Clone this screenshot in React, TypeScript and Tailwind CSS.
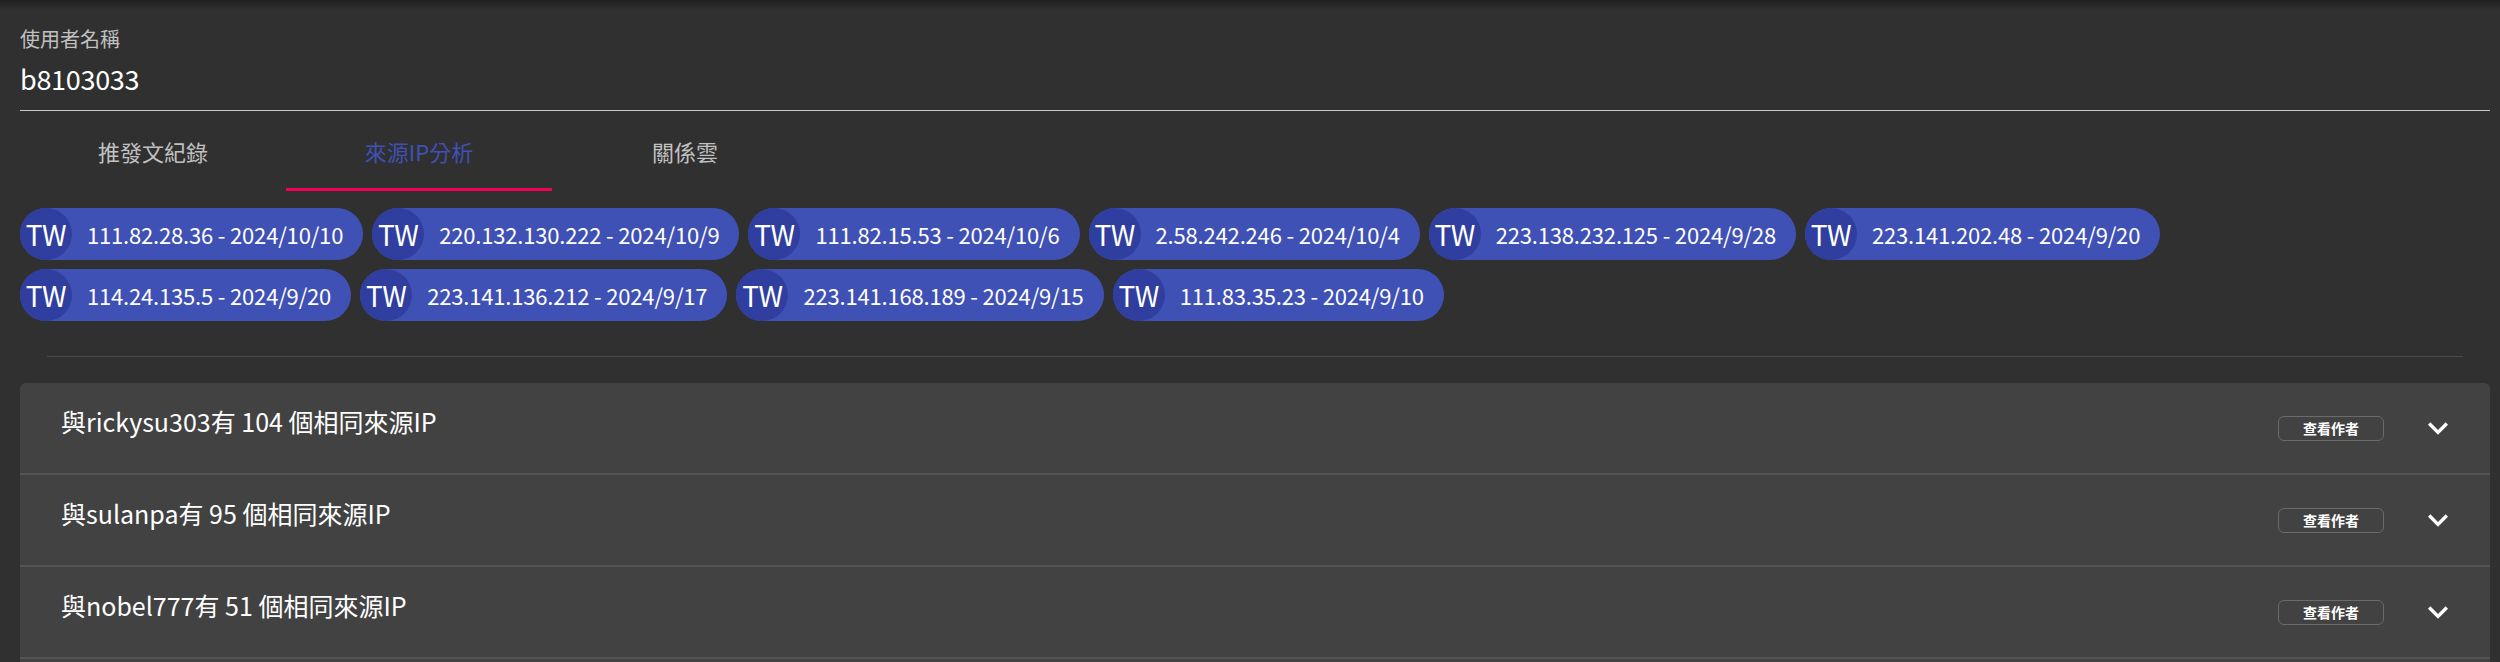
const ips = [
  { ip: '111.82.28.36', date: '2024/10/10' },
  { ip: '220.132.130.222', date: '2024/10/9' },
  { ip: '111.82.15.53', date: '2024/10/6' },
  { ip: '2.58.242.246', date: '2024/10/4' },
  { ip: '223.138.232.125', date: '2024/9/28' },
  { ip: '223.141.202.48', date: '2024/9/20' },
  { ip: '114.24.135.5', date: '2024/9/20' },
  { ip: '223.141.136.212', date: '2024/9/17' },
  { ip: '223.141.168.189', date: '2024/9/15' },
  { ip: '111.83.35.23', date: '2024/9/10' },
];

const related = [
  { name: 'rickysu303', count: 104 },
  { name: 'sulanpa', count: 95 },
  { name: 'nobel777', count: 51 },
];

const tabs = ['推發文紀錄', '來源IP分析', '關係雲'];

const ExpandMore = () => (
  <svg viewBox="0 0 24 24" className="w-[40px] h-[40px] fill-white">
    <path d="M16.59 8.59L12 13.17 7.41 8.59 6 10l6 6 6-6z" />
  </svg>
);

const App = () => {
  return (
    <div className="relative min-h-screen bg-[#303030] text-white font-['Noto_Sans_CJK_TC',sans-serif]">
      {/* app bar shadow */}
      <div className="absolute inset-x-0 top-0 h-[10px] bg-gradient-to-b from-[#1f1f1f] to-transparent" />

      <div className="pl-[20px] pr-[10px]">
        {/* username field */}
        <div className="pt-[24px] border-b border-[#c8c8c8]">
          <div className="text-[20px] leading-[30px] text-[#c1c1c1]">使用者名稱</div>
          <div className="mt-[5px] pb-[11px] text-[27px] leading-[40px] tracking-[-0.3px] text-white">b8103033</div>
        </div>

        {/* tabs */}
        <div className="flex h-[80px]">
          {tabs.map((t, i) => (
            <div
              key={t}
              className={
                i === 1
                  ? 'relative w-[266px] flex items-center justify-center text-[22px] text-[#3f51b5]'
                  : 'relative w-[266px] flex items-center justify-center text-[22px] text-[#c1c1c1]'
              }
            >
              {t}
              {i === 1 && <div className="absolute inset-x-0 bottom-0 h-[3px] bg-[#f50057]" />}
            </div>
          ))}
        </div>

        {/* ip chips */}
        <div className="mt-[17px] flex flex-wrap gap-x-[9px] gap-y-[9px]">
          {ips.map((item) => (
            <div key={item.ip} className="flex items-center h-[52px] rounded-full bg-[#3f51b5]">
              <div className="w-[52px] h-[52px] rounded-full bg-[#303f9f] flex items-center justify-center text-[28px] tracking-[-0.5px] text-white">
                TW
              </div>
              <span className="pl-[15px] pr-[20px] text-[22px] tracking-[-0.18px] text-white whitespace-nowrap">
                {item.ip} - {item.date}
              </span>
            </div>
          ))}
        </div>

        <div className="mx-[27px] mt-[35px] h-px bg-[#4b4b4b]" />

        {/* accordion */}
        <div className="mt-[26px] rounded-[6px] bg-[#424242] overflow-hidden">
          {related.map((r, i) => (
            <div
              key={r.name}
              className={
                i === 0
                  ? 'flex items-center h-[90px] pl-[41px] pr-[32px]'
                  : 'flex items-center h-[92px] pl-[41px] pr-[32px] border-t-2 border-[#545454]'
              }
            >
              <div className="flex-1 pb-[12px] text-[25px] text-white">
                與{r.name}有 {r.count} 個相同來源IP
              </div>
              <button className="w-[106px] h-[25px] rounded-[6px] border border-[#6b6b6b] text-[14px] font-bold text-white leading-none">
                查看作者
              </button>
              <div className="ml-[34px] w-[40px] h-[40px] flex items-center justify-center">
                <ExpandMore />
              </div>
            </div>
          ))}
          <div className="h-[20px] border-t-2 border-[#545454]" />
        </div>
      </div>
    </div>
  );
};

export default App;
